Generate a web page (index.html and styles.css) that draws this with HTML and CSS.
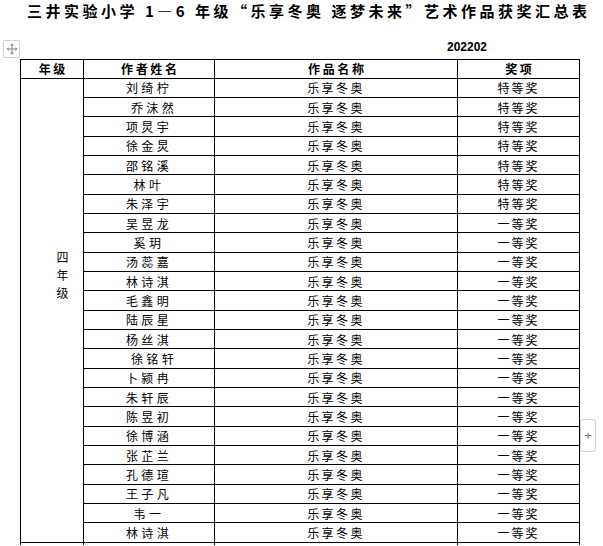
FILE: index.html
```html
<!DOCTYPE html>
<html lang="zh-CN">
<head>
<meta charset="utf-8">
<title>艺术作品获奖汇总表</title>
<link rel="stylesheet" href="styles.css">
</head>
<body>
<div class="page">
  <h1 class="title">三井实验小学 1—6 年级“乐享冬奥 逐梦未来”艺术作品获奖汇总表</h1>
  <div class="meta">
    <span class="move-handle">
      <svg viewBox="0 0 16 16" width="12" height="12"><path d="M8 2.5v11M2.5 8h11" stroke="#7a7a7a" stroke-width="1.2" fill="none"/><path d="M8 0.8l-2.4 2.6h4.8zM8 15.2l-2.4-2.6h4.8zM0.8 8l2.6-2.4v4.8zM15.2 8l-2.6-2.4v4.8z" fill="#7a7a7a"/></svg>
    </span>
    <span class="date">202202</span>
  </div>
  <table class="awards">
    <colgroup>
      <col class="c-grade"><col class="c-name"><col class="c-work"><col class="c-prize">
    </colgroup>
    <thead>
      <tr><th class="h-grade">年级</th><th class="h-name">作者姓名</th><th class="h-work">作品名称</th><th class="h-prize">奖项</th></tr>
    </thead>
    <tbody>
      <tr><td class="grade" rowspan="24"><span class="grade-text">四<br>年<br>级</span></td><td class="name">刘绮柠</td><td class="work">乐享冬奥</td><td class="prize">特等奖</td></tr>
      <tr><td class="name shift">乔沫然</td><td class="work">乐享冬奥</td><td class="prize">特等奖</td></tr>
      <tr><td class="name">项炅宇</td><td class="work">乐享冬奥</td><td class="prize">特等奖</td></tr>
      <tr><td class="name">徐金炅</td><td class="work">乐享冬奥</td><td class="prize">特等奖</td></tr>
      <tr><td class="name">邵铭溪</td><td class="work">乐享冬奥</td><td class="prize">特等奖</td></tr>
      <tr><td class="name">林叶</td><td class="work">乐享冬奥</td><td class="prize">特等奖</td></tr>
      <tr><td class="name">朱泽宇</td><td class="work">乐享冬奥</td><td class="prize">特等奖</td></tr>
      <tr><td class="name">吴昱龙</td><td class="work">乐享冬奥</td><td class="prize">一等奖</td></tr>
      <tr><td class="name">奚玥</td><td class="work">乐享冬奥</td><td class="prize">一等奖</td></tr>
      <tr><td class="name">汤蕊嘉</td><td class="work">乐享冬奥</td><td class="prize">一等奖</td></tr>
      <tr><td class="name">林诗淇</td><td class="work">乐享冬奥</td><td class="prize">一等奖</td></tr>
      <tr><td class="name">毛鑫明</td><td class="work">乐享冬奥</td><td class="prize">一等奖</td></tr>
      <tr><td class="name">陆辰星</td><td class="work">乐享冬奥</td><td class="prize">一等奖</td></tr>
      <tr><td class="name">杨丝淇</td><td class="work">乐享冬奥</td><td class="prize">一等奖</td></tr>
      <tr><td class="name shift">徐铭轩</td><td class="work">乐享冬奥</td><td class="prize">一等奖</td></tr>
      <tr><td class="name">卜颍冉</td><td class="work">乐享冬奥</td><td class="prize">一等奖</td></tr>
      <tr><td class="name">朱轩辰</td><td class="work">乐享冬奥</td><td class="prize">一等奖</td></tr>
      <tr><td class="name">陈昱初</td><td class="work">乐享冬奥</td><td class="prize">一等奖</td></tr>
      <tr><td class="name">徐博涵</td><td class="work">乐享冬奥</td><td class="prize">一等奖</td></tr>
      <tr><td class="name">张芷兰</td><td class="work">乐享冬奥</td><td class="prize">一等奖</td></tr>
      <tr><td class="name">孔德瑄</td><td class="work">乐享冬奥</td><td class="prize">一等奖</td></tr>
      <tr><td class="name">王子凡</td><td class="work">乐享冬奥</td><td class="prize">一等奖</td></tr>
      <tr><td class="name">韦一</td><td class="work">乐享冬奥</td><td class="prize">一等奖</td></tr>
      <tr><td class="name">林诗淇</td><td class="work">乐享冬奥</td><td class="prize">一等奖</td></tr>
      <tr class="cut-row"><td class="grade"></td><td></td><td></td><td></td></tr>
    </tbody>
  </table>
  <button class="add-col" type="button">+</button>
</div>
</body>
</html>
```
FILE: styles.css
```css
html, body {
  margin: 0;
  padding: 0;
  background: #fff;
  overflow: hidden;
}
body {
  font-family: "Noto Sans CJK SC", "Liberation Sans", sans-serif;
  color: #000;
}
.page {
  position: relative;
  width: 603px;
  height: 546px;
  overflow: hidden;
}
.title {
  margin: 0;
  padding-left: 27px;
  font-size: 15px;
  line-height: 22px;
  font-weight: 700;
  letter-spacing: 3.5px;
  white-space: nowrap;
}
.meta {
  position: relative;
  height: 37px;
  display: flex;
  align-items: flex-end;
  padding-left: 447px;
  padding-bottom: 5px;
  box-sizing: border-box;
}
.date {
  font-family: "Liberation Sans", sans-serif;
  font-weight: 700;
  font-size: 12px;
  line-height: 14px;
}
.move-handle {
  position: absolute;
  left: 3px;
  top: 18px;
  width: 15px;
  height: 16px;
  border: 1px solid #cfcfcf;
  border-radius: 2px;
  background: #fff;
  display: flex;
  align-items: center;
  justify-content: center;
}
.awards {
  margin-left: 20px;
  border-collapse: collapse;
  table-layout: fixed;
  width: 559px;
}
.c-grade { width: 63px; }
.c-name { width: 131px; }
.c-work { width: 243px; }
.c-prize { width: 122px; }
.awards th, .awards td {
  border: 1px solid #000;
  padding: 1px 0 0 0;
  font-size: 12px;
  line-height: 16px;
  text-align: center;
  white-space: nowrap;
  overflow: hidden;
}
.awards thead tr { height: 18.7px; }
.awards tbody tr { height: 19.33px; }
.awards tbody tr.cut-row { height: 3px; }
.awards tr.cut-row td { padding: 0; line-height: 0; border-bottom: 0; }
.awards th {
  font-weight: 700;
  letter-spacing: 2.6px;
  padding-left: 2.6px;
}
.h-grade { letter-spacing: 1px; padding-left: 1px; }
.name { letter-spacing: 3.4px; padding-left: 4px; }
.name.shift { padding-left: 10px; }
.work { letter-spacing: 2.4px; padding-left: 3px; }
.prize { letter-spacing: 2px; padding-left: 1px; }
.awards td.grade {
  vertical-align: middle;
  padding: 0 0 70px 21px;
}
.awards tr.cut-row td.grade { padding: 0; }
.grade-text {
  display: inline-block;
  line-height: 18px;
  font-size: 12px;
}
.add-col {
  position: absolute;
  left: 580px;
  top: 419px;
  width: 16px;
  height: 33px;
  padding: 0;
  border: 1px solid #cfcfcf;
  border-radius: 3px;
  background: #fff;
  color: #777;
  font-family: "Liberation Sans", sans-serif;
  font-size: 13px;
  line-height: 30px;
}
```
